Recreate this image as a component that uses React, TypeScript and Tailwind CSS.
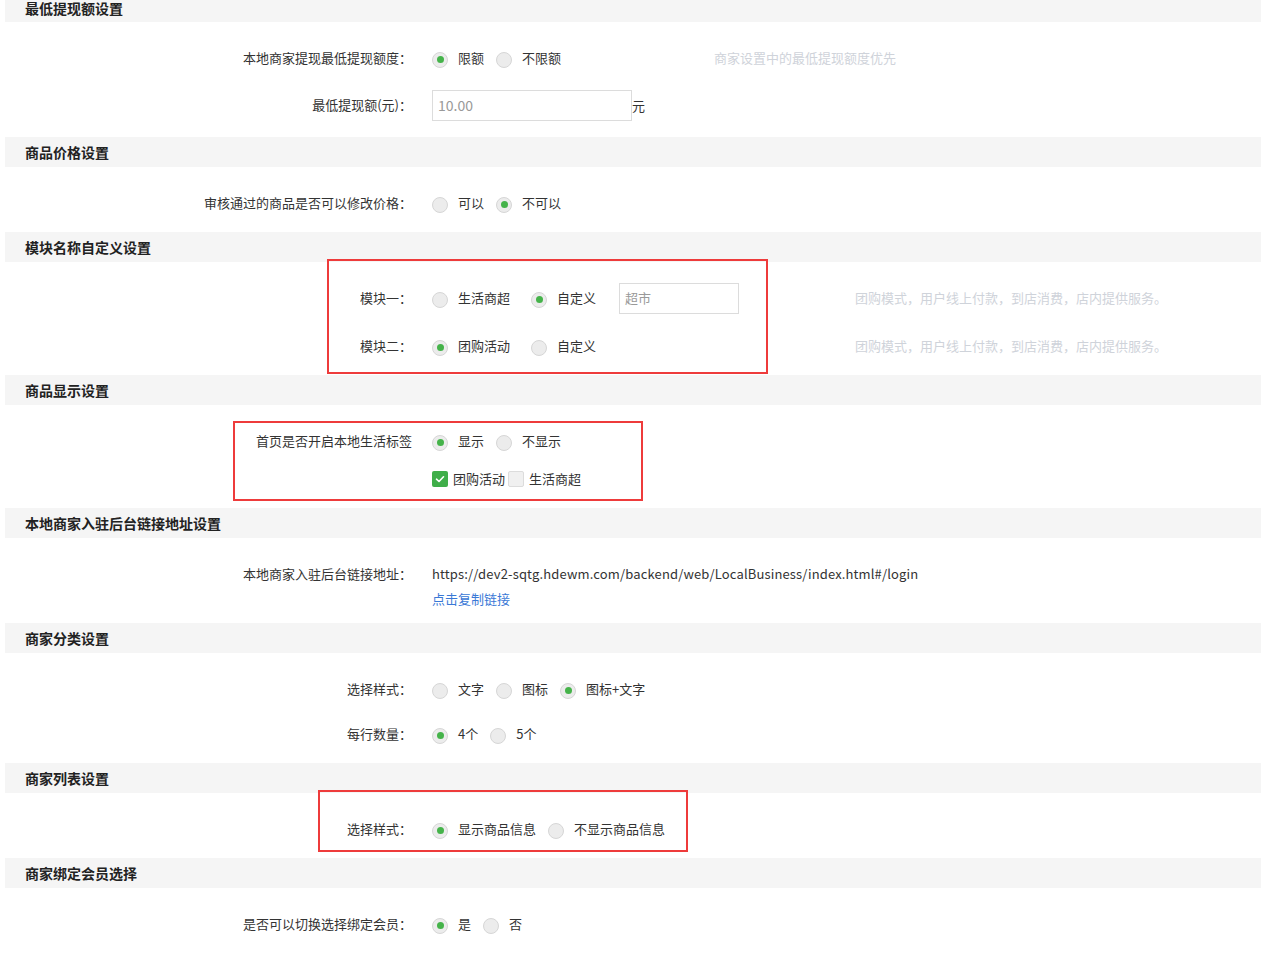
import React from "react";

const FONT = '"Noto Sans CJK SC", "Noto Sans", sans-serif';

function Radio({ checked }: { checked?: boolean }) {
  return (
    <span className="mt-[3px] flex h-[16px] w-[16px] shrink-0 items-center justify-center rounded-full border border-[#d6d6d6] bg-[#ececec]">
      {checked && <span className="h-[7px] w-[7px] rounded-full bg-[#45b34a]" />}
    </span>
  );
}

function RadioItem({ checked, label, gap = "mr-[12px]" }: { checked?: boolean; label: string; gap?: string }) {
  return (
    <span className={`flex items-center ${gap}`}>
      <Radio checked={checked} />
      <span className="ml-[10px] text-[13px] text-[#333]">{label}</span>
    </span>
  );
}

function Header({ title, first }: { title: string; first?: boolean }) {
  return (
    <div
      className={`ml-[5px] flex bg-[#f5f5f5] pl-[20px] text-[14px] font-bold text-[#222] ${
        first ? "h-[22px] items-start leading-[16px]" : "h-[30px] items-center"
      }`}
    >
      {title}
    </div>
  );
}

function Row({ label, children, h = "h-[32px]" }: { label?: string; children?: React.ReactNode; h?: string }) {
  return (
    <div className={`flex items-center ${h}`}>
      <div className="w-[412px] shrink-0 text-right text-[13px] text-[#333]">{label}</div>
      <div className="ml-[20px] flex items-center">{children}</div>
    </div>
  );
}

function Hint({ text, className }: { text: string; className: string }) {
  return <span className={`text-[13px] text-[#cfd3da] ${className}`}>{text}</span>;
}

function RedBox({ className }: { className: string }) {
  return <div className={`pointer-events-none absolute border-2 border-[#ee3b3b] ${className}`} />;
}

export default function App() {
  return (
    <div className="h-[969px] w-[1261px] overflow-hidden bg-white" style={{ fontFamily: FONT }}>
      <Header title="最低提现额设置" first />
      <div className="flex flex-col gap-[15px] pb-[16px] pt-[20px]">
        <Row label="本地商家提现最低提现额度：">
          <RadioItem checked label="限额" />
          <RadioItem label="不限额" />
          <Hint text="商家设置中的最低提现额度优先" className="ml-[141px]" />
        </Row>
        <Row label="最低提现额(元)：">
          <span className="flex h-[31px] w-[200px] items-center border border-[#dcdcdc] px-[5px] text-[14px] text-[#999]">10.00</span>
          <span className="mt-[2px] text-[13px] text-[#333]">元</span>
        </Row>
      </div>

      <Header title="商品价格设置" />
      <div className="flex flex-col pb-[13px] pt-[20px]">
        <Row label="审核通过的商品是否可以修改价格：">
          <RadioItem label="可以" />
          <RadioItem checked label="不可以" />
        </Row>
      </div>

      <Header title="模块名称自定义设置" />
      <div className="relative flex flex-col gap-[16px] pb-[13px] pt-[20px]">
        <RedBox className="left-[327px] top-[-3px] h-[115px] w-[441px]" />
        <Row label="模块一：">
          <RadioItem label="生活商超" gap="mr-[21px]" />
          <RadioItem checked label="自定义" gap="mr-[23px]" />
          <span className="flex h-[31px] w-[120px] items-center border border-[#dcdcdc] px-[5px] text-[13px] text-[#999]">超市</span>
          <Hint text="团购模式，用户线上付款，到店消费，店内提供服务。" className="ml-[116px]" />
        </Row>
        <Row label="模块二：">
          <RadioItem checked label="团购活动" gap="mr-[21px]" />
          <RadioItem label="自定义" gap="mr-[23px]" />
          <Hint text="团购模式，用户线上付款，到店消费，店内提供服务。" className="ml-[236px]" />
        </Row>
      </div>

      <Header title="商品显示设置" />
      <div className="relative flex flex-col gap-[6px] pb-[13px] pt-[20px]">
        <RedBox className="left-[233px] top-[16px] h-[80px] w-[410px]" />
        <Row label="首页是否开启本地生活标签">
          <RadioItem checked label="显示" />
          <RadioItem label="不显示" />
        </Row>
        <Row>
          <span className="flex h-[16px] w-[16px] items-center justify-center rounded-[2px] bg-[#3fae49]">
            <svg viewBox="0 0 16 16" className="h-[16px] w-[16px]">
              <path d="M4.5 8.2 L7 10.5 L11.5 5.8" fill="none" stroke="#fff" strokeWidth="1.6" strokeLinecap="round" strokeLinejoin="round" />
            </svg>
          </span>
          <span className="ml-[5px] text-[13px] text-[#333]">团购活动</span>
          <span className="ml-[3px] h-[16px] w-[16px] rounded-[2px] border border-[#dcdcdc] bg-[#f0f0f0]" />
          <span className="ml-[5px] text-[13px] text-[#333]">生活商超</span>
        </Row>
      </div>

      <Header title="本地商家入驻后台链接地址设置" />
      <div className="flex flex-col pb-[15px] pt-[20px]">
        <Row label="本地商家入驻后台链接地址：">
          <span className="text-[13px] tracking-[0.15px] text-[#333]">https://dev2-sqtg.hdewm.com/backend/web/LocalBusiness/index.html#/login</span>
        </Row>
        <Row h="h-[18px]">
          <span className="text-[13px] text-[#3a78d6]">点击复制链接</span>
        </Row>
      </div>

      <Header title="商家分类设置" />
      <div className="flex flex-col gap-[13px] pb-[13px] pt-[20px]">
        <Row label="选择样式：">
          <RadioItem label="文字" />
          <RadioItem label="图标" />
          <RadioItem checked label="图标+文字" />
        </Row>
        <Row label="每行数量：">
          <RadioItem checked label="4个" />
          <RadioItem label="5个" />
        </Row>
      </div>

      <Header title="商家列表设置" />
      <div className="relative flex flex-col pb-[13px] pt-[20px]">
        <RedBox className="left-[318px] top-[-3px] h-[62px] w-[370px]" />
        <Row label="选择样式：">
          <RadioItem checked label="显示商品信息" />
          <RadioItem label="不显示商品信息" />
        </Row>
      </div>

      <Header title="商家绑定会员选择" />
      <div className="flex flex-col pt-[20px]">
        <Row label="是否可以切换选择绑定会员：">
          <RadioItem checked label="是" />
          <RadioItem label="否" />
        </Row>
      </div>
    </div>
  );
}
